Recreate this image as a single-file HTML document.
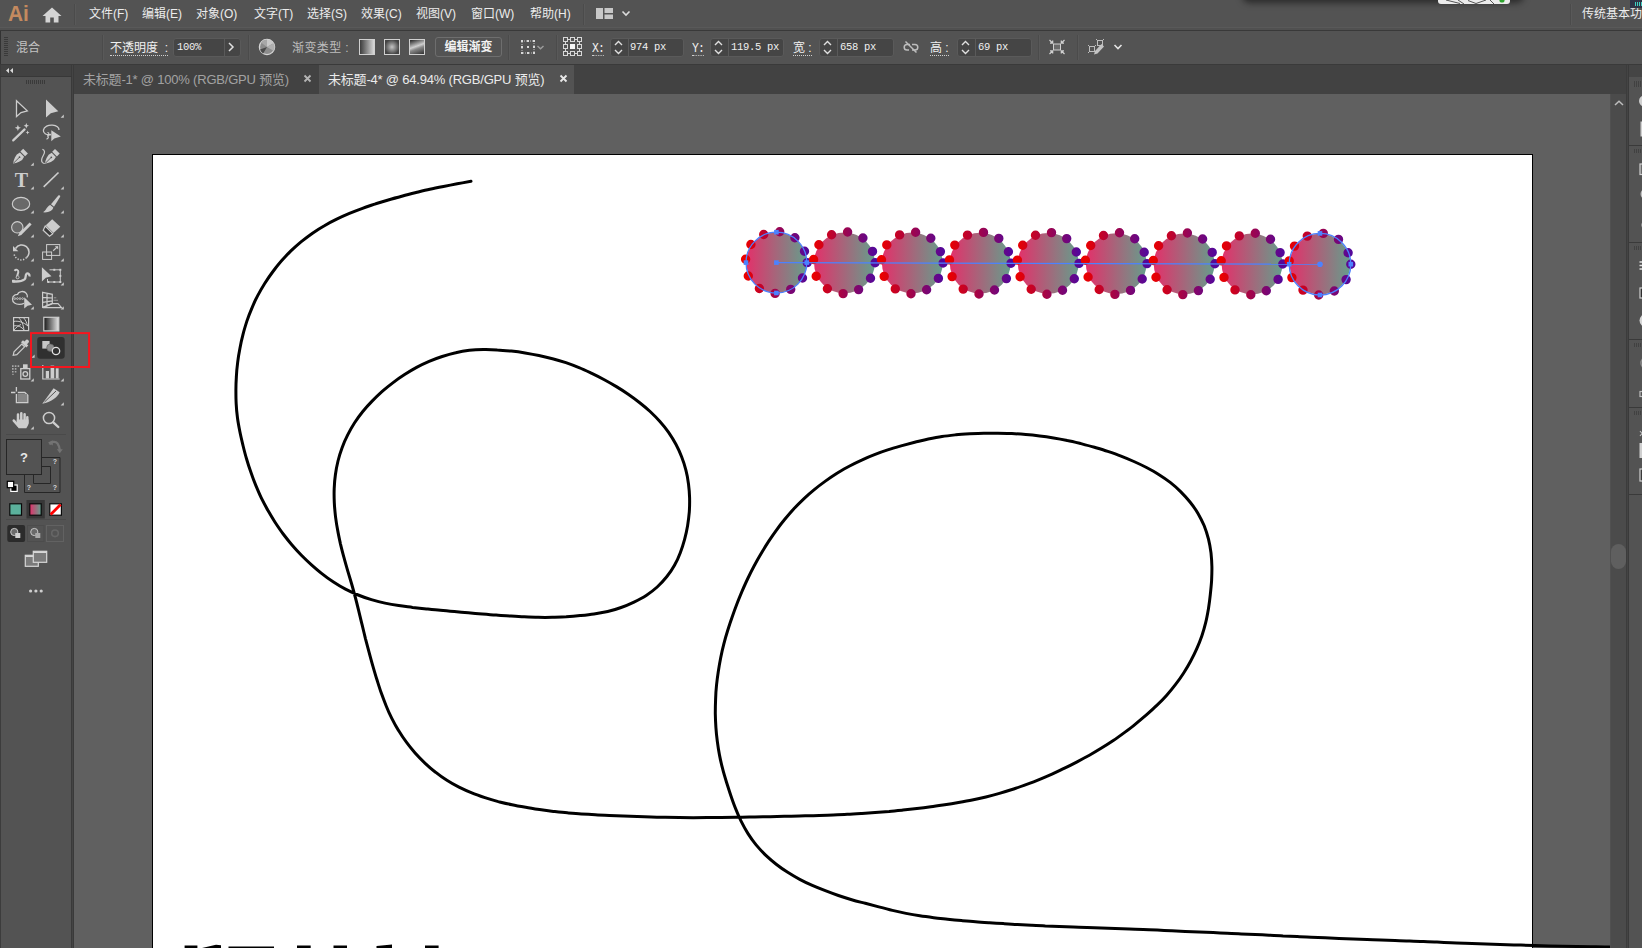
<!DOCTYPE html>
<html lang="zh-CN"><head><meta charset="utf-8"><title>Adobe Illustrator</title>
<style>
*{box-sizing:border-box;margin:0;padding:0}
html,body{width:1642px;height:948px;overflow:hidden;background:#606060}
body{position:relative;font-family:"Liberation Sans","Noto Sans CJK SC",sans-serif;font-size:12px;color:#e6e6e6}
.abs{position:absolute}
#menubar{position:absolute;left:0;top:0;width:1642px;height:29px;background:#535353}
#menuline{position:absolute;left:0;top:27px;width:1642px;height:4px;background:linear-gradient(#595959 0 1px,#505050 1px 3px,#393939 3px 4px)}
#ctrlbar{position:absolute;left:0;top:31px;width:1642px;height:33px;background:#535353}
.mi{position:absolute;top:0;height:29px;line-height:29px;white-space:nowrap;color:#ececec;font-size:12px}
.vsep{position:absolute;width:2px;background:linear-gradient(90deg,#4b4b4b 0 1px,#595959 1px 2px)}
.lbl{position:absolute;top:32px;height:33px;line-height:32px;white-space:nowrap;font-size:12px}
.ul{border-bottom:1px dotted #d0d0d0;height:auto;line-height:13px;top:42px;padding-bottom:0}
.fld{position:absolute;top:38px;height:19px;background:#454545;border:1px solid #5a5a5a;border-radius:3px}
.fld .dv{position:absolute;top:0;bottom:0;width:1px;background:#5a5a5a}
.num{position:absolute;top:38px;height:19px;line-height:18px;font-family:"Liberation Mono",monospace;font-size:10.5px;letter-spacing:-0.3px;color:#f0f0f0;white-space:pre}
#tabbar{position:absolute;left:74px;top:64px;width:1568px;height:30px;background:#424242}
.tab{position:absolute;top:65px;height:30px;line-height:29px;font-size:13px;letter-spacing:-0.2px;white-space:nowrap}
#tools{position:absolute;left:0;top:64px;width:72px;height:884px;background:#535353}
#toolshead{position:absolute;left:0;top:64px;width:72px;height:13px;background:#424242}
#toolsedge{position:absolute;left:71px;top:64px;width:3px;height:884px;background:linear-gradient(90deg,#3a3a3a 0 1px,#444 1px 2px,#3a3a3a 2px 3px)}
#artboard{position:absolute;left:152px;top:154px;width:1381px;height:800px;background:#fff;border:1px solid #000}
svg{position:absolute;overflow:visible}
</style></head><body>

<div id="menubar"></div><div id="menuline"></div><div id="ctrlbar"></div>
<div class="abs" style="left:8px;top:0;height:29px;line-height:28px;font-size:22px;font-weight:bold;color:#c48a5f;transform:scaleX(.95);transform-origin:0 50%">Ai</div>
<svg style="left:42px;top:7px" width="20" height="16" viewBox="0 0 20 16"><path d="M10 0.5 L19.5 9 H16.5 V15.5 H11.8 V10.5 H8.2 V15.5 H3.5 V9 H0.5 Z" fill="#d4d4d4"/></svg>
<div class="vsep" style="left:74px;top:4px;height:21px"></div>
<div class="mi" style="left:89px">文件(F)</div>
<div class="mi" style="left:142px">编辑(E)</div>
<div class="mi" style="left:196px">对象(O)</div>
<div class="mi" style="left:254px">文字(T)</div>
<div class="mi" style="left:307px">选择(S)</div>
<div class="mi" style="left:361px">效果(C)</div>
<div class="mi" style="left:416px">视图(V)</div>
<div class="mi" style="left:471px">窗口(W)</div>
<div class="mi" style="left:530px">帮助(H)</div>
<div class="vsep" style="left:583px;top:4px;height:21px"></div>
<svg style="left:596px;top:8px" width="36" height="12" viewBox="0 0 36 12"><path d="M0 0h7v11h-7zM8.5 0h8.5v5h-8.5zM8.5 6.5h8.5v4.5h-8.5z" fill="#c8c8c8"/><path d="M26.5 3.5l3.5 3.5l3.5-3.5" fill="none" stroke="#dcdcdc" stroke-width="1.6"/></svg>
<div class="vsep" style="left:1570px;top:4px;height:21px"></div>
<div class="mi" style="left:1582px">传统基本功</div>
<!-- floating popup fragment at top -->
<div class="abs" style="left:1246px;top:-22px;width:274px;height:18px;background:#222;box-shadow:0 3px 6px 4px rgba(20,20,20,.62);border-radius:4px"></div>
<div class="abs" style="left:1438px;top:-6px;width:72px;height:10px;background:#ececec;border-radius:3px;overflow:hidden"><svg style="left:0;top:0" width="72" height="10" viewBox="0 0 72 10"><path d="M8 6l14 3.500M20 6l6 4M30 6.500l8 3l10-3.500M52 6l4 4" stroke="#555" stroke-width="1" fill="none"/><circle cx="64" cy="6" r="2.600" fill="#2ea52e"/></svg></div>
<div class="abs" style="left:1630px;top:0;width:12px;height:8px;background:#2e3446"></div>
<div class="abs" style="left:1635px;top:2px;width:7px;height:4px;background:repeating-linear-gradient(90deg,#3fd0c0 0 1px,transparent 1px 2px)"></div>

<!-- control bar -->
<div class="abs" style="left:0;top:31px;width:1px;height:33px;background:#333"></div>
<div class="abs" style="left:4px;top:37px;width:4px;height:20px;background:repeating-linear-gradient(#3a3a3a 0 1px,transparent 1px 2px)"></div>
<div class="lbl" style="left:16px;color:#c4c4c4">混合</div>
<div class="vsep" style="left:102px;top:35px;height:25px"></div>
<div class="lbl ul" style="left:110px;color:#f0f0f0">不透明度&nbsp; :</div>
<div class="fld" style="left:173px;width:68px"><div class="dv" style="left:50px"></div></div>
<div class="num" style="left:177px">100%</div>
<svg style="left:227px;top:42px" width="8" height="10" viewBox="0 0 8 10"><path d="M2 1l4 4l-4 4" fill="none" stroke="#e0e0e0" stroke-width="1.5"/></svg>
<div class="vsep" style="left:248px;top:35px;height:25px"></div>
<svg style="left:258px;top:38px" width="18" height="18" viewBox="0 0 18 18"><circle cx="9" cy="9" r="7.6" fill="#8c8c8c" stroke="#d6d6d6" stroke-width="1.3"/><path d="M9 9L9 1.5A7.5 7.5 0 0 1 15.5 5.2Z" fill="#c9c9c9"/><path d="M9 9L15.5 5.2A7.5 7.5 0 0 1 15.5 12.8Z" fill="#b0b0b0"/><path d="M9 9L5.2 15.5A7.5 7.5 0 0 1 2 11.5Z" fill="#4a4a4a"/><path d="M9 9L9 1.5A7.5 7.5 0 0 0 3 4.5Z" fill="#a8a8a8"/></svg>
<div class="lbl" style="left:292px;color:#bdbdbd;letter-spacing:.4px">渐变类型 :</div>
<div class="abs" style="left:359px;top:39px;width:16px;height:16px;border:1px solid #d0d0d0;background:linear-gradient(90deg,#3c3c3c,#d8d8d8)"></div>
<div class="abs" style="left:384px;top:39px;width:16px;height:16px;border:1px solid #d0d0d0;background:radial-gradient(circle,#c4c4c4,#444 75%)"></div>
<div class="abs" style="left:409px;top:39px;width:16px;height:16px;border:1px solid #d0d0d0;background:linear-gradient(160deg,#333 5%,#cfcfcf 45%,#888 60%,#3a3a3a 95%)"></div>
<div class="abs" style="left:435px;top:37px;width:67px;height:20px;border:1px solid #6e6e6e;border-radius:3px;text-align:center;line-height:18px;font-weight:bold;color:#f2f2f2;font-size:12px">编辑渐变</div>
<div class="vsep" style="left:508px;top:35px;height:25px"></div>
<svg style="left:520px;top:39px" width="26" height="16" viewBox="0 0 26 16"><path d="M2 2h12v12h-12z" fill="none" stroke="#bdbdbd" stroke-width="1" stroke-dasharray="1 1"/><g fill="#d8d8d8"><rect x="1" y="1" width="2" height="2"/><rect x="1" y="7" width="2" height="2"/><rect x="1" y="13" width="2" height="2"/><rect x="7" y="1" width="2" height="2"/><rect x="7" y="7" width="2" height="2"/><rect x="7" y="13" width="2" height="2"/><rect x="13" y="1" width="2" height="2"/><rect x="13" y="7" width="2" height="2"/><rect x="13" y="13" width="2" height="2"/></g><path d="M17.500 7l3 2.800l3-2.800" fill="none" stroke="#9c9c9c" stroke-width="1.400"/></svg>
<div class="vsep" style="left:556px;top:35px;height:25px"></div>
<svg style="left:563px;top:37px" width="19" height="19" viewBox="0 0 19 19"><g fill="none" stroke="#d8d8d8" stroke-width="1"><path d="M2.5 2.5h14v14h-14z"/><path d="M9.5 2.5v14M2.5 9.5h14" stroke-opacity=".0"/></g><g fill="#535353" stroke="#d8d8d8" stroke-width="1"><rect x=".5" y=".5" width="4" height="4"/><rect x="7.5" y=".5" width="4" height="4"/><rect x="14.5" y=".5" width="4" height="4"/><rect x=".5" y="7.5" width="4" height="4"/><rect x="14.5" y="7.5" width="4" height="4"/><rect x=".5" y="14.5" width="4" height="4"/><rect x="7.5" y="14.5" width="4" height="4"/><rect x="14.5" y="14.5" width="4" height="4"/></g><rect x="7" y="7" width="5" height="5" fill="#f4f4f4"/></svg>
<div class="lbl ul" style="left:592px;font-family:'Liberation Mono',monospace;font-size:13.5px;letter-spacing:-1px;color:#f0f0f0;transform:scaleX(.85);transform-origin:0 50%">X:</div>
<div class="fld" style="left:610px;width:74px"><div class="dv" style="left:17px"></div></div>
<svg style="left:613px;top:40px" width="11" height="15" viewBox="0 0 11 15"><path d="M2 5l3.5-3.5l3.5 3.5M2 10l3.5 3.5l3.5-3.5" fill="none" stroke="#e0e0e0" stroke-width="1.4"/></svg>
<div class="num" style="left:630px">974 px</div>
<div class="lbl ul" style="left:692px;font-family:'Liberation Mono',monospace;font-size:13.5px;letter-spacing:-1px;color:#f0f0f0;transform:scaleX(.85);transform-origin:0 50%">Y:</div>
<div class="fld" style="left:710px;width:74px"><div class="dv" style="left:17px"></div></div>
<svg style="left:713px;top:40px" width="11" height="15" viewBox="0 0 11 15"><path d="M2 5l3.5-3.5l3.5 3.5M2 10l3.5 3.5l3.5-3.5" fill="none" stroke="#e0e0e0" stroke-width="1.4"/></svg>
<div class="num" style="left:731px">119.5 px</div>
<div class="lbl ul" style="left:793px;color:#f0f0f0">宽 :</div>
<div class="fld" style="left:819px;width:75px"><div class="dv" style="left:17px"></div></div>
<svg style="left:822px;top:40px" width="11" height="15" viewBox="0 0 11 15"><path d="M2 5l3.5-3.5l3.5 3.5M2 10l3.5 3.5l3.5-3.5" fill="none" stroke="#e0e0e0" stroke-width="1.4"/></svg>
<div class="num" style="left:840px">658 px</div>
<svg style="left:903px;top:40px" width="16" height="14" viewBox="0 0 16 14"><g fill="none" stroke="#bdbdbd" stroke-width="1.5"><path d="M7 4.5H4a2.8 2.8 0 0 0 0 5.6h2"/><path d="M9 4.5h3a2.8 2.8 0 0 1 0 5.6h-3"/><path d="M2.5 1.5l11 11"/></g></svg>
<div class="lbl ul" style="left:930px;color:#f0f0f0">高 :</div>
<div class="fld" style="left:957px;width:75px"><div class="dv" style="left:17px"></div></div>
<svg style="left:960px;top:40px" width="11" height="15" viewBox="0 0 11 15"><path d="M2 5l3.5-3.5l3.5 3.5M2 10l3.5 3.5l3.5-3.5" fill="none" stroke="#e0e0e0" stroke-width="1.4"/></svg>
<div class="num" style="left:978px">69 px</div>
<div class="vsep" style="left:1038px;top:35px;height:25px"></div>
<svg style="left:1049px;top:39px" width="16" height="16" viewBox="0 0 16 16"><rect x="4.5" y="5" width="7" height="6" fill="#6a6a6a" stroke="#d0d0d0" stroke-width="1"/><g stroke="#d0d0d0" stroke-width="1.2" fill="none"><path d="M0.5 1l3 3M1 4.2h2.7V1.5"/><path d="M15.5 1l-3 3M15 4.2h-2.7V1.5"/><path d="M0.5 15l3-3M1 11.8h2.7v2.7"/><path d="M15.5 15l-3-3M15 11.8h-2.7v2.7"/></g></svg>
<div class="vsep" style="left:1077px;top:35px;height:25px"></div>
<svg style="left:1087px;top:38px" width="18" height="18" viewBox="0 0 18 18"><rect x="2.5" y="8.5" width="5" height="5" fill="none" stroke="#bdbdbd"/><rect x="10.5" y="2.5" width="5" height="5" fill="none" stroke="#bdbdbd"/><path d="M1 7l1.5 1.5M9 15l-1.500-1.500M9 7l-1.500 1.500M1 15l1.500-1.500M9 1l1.500 1.500M17 1l-1.500 1.500" stroke="#bdbdbd" fill="none"/><path d="M7 16.500l1-3.500l6.500-7l2.500 2.500l-6.500 7z" fill="#c4c4c4"/></svg>
<svg style="left:1113px;top:43px" width="10" height="8" viewBox="0 0 10 8"><path d="M1.500 2l3.500 3.500l3.500-3.500" fill="none" stroke="#e4e4e4" stroke-width="1.6"/></svg>

<!-- tab bar -->
<div id="tabbar"></div>
<div class="tab" style="left:83px;color:#a2a2a2">未标题-1* @ 100% (RGB/GPU 预览)</div>
<div class="abs" style="left:303px;top:74px;width:9px;height:9px"><svg style="left:0;top:0" width="9" height="9" viewBox="0 0 9 9"><path d="M1.500 1.500l6 6M7.500 1.500l-6 6" stroke="#b4b4b4" stroke-width="1.800"/></svg></div>
<div class="abs" style="left:319px;top:64px;width:255px;height:30px;background:#535353"></div>
<div class="tab" style="left:328px;color:#ebebeb">未标题-4* @ 64.94% (RGB/GPU 预览)</div>
<div class="abs" style="left:559px;top:74px;width:9px;height:9px"><svg style="left:0;top:0" width="9" height="9" viewBox="0 0 9 9"><path d="M1.500 1.500l6 6M7.500 1.500l-6 6" stroke="#e8e8e8" stroke-width="1.800"/></svg></div>

<div id="tools"></div><div id="toolshead"></div><div id="toolsedge"></div>
<div class="abs" style="left:0;top:64px;width:1px;height:884px;background:#3c3c3c"></div>
<div class="abs" style="left:0;top:76px;width:72px;height:1px;background:#383838"></div>
<svg style="left:0;top:0" width="100" height="948" viewBox="0 0 100 948">
<defs>
<linearGradient id="gPT" x1="0" x2="1" y1="0" y2="0"><stop offset="0" stop-color="#e2306a"/><stop offset="1" stop-color="#5fa28e"/></linearGradient>
<linearGradient id="gBW" x1="0" x2="1" y1="0" y2="0"><stop offset="0" stop-color="#161616"/><stop offset="1" stop-color="#e8e8e8"/></linearGradient>
<path id="cnr" d="M3.200 0V3.200H0Z" fill="#c8c8c8"/>
</defs>
<!-- header collapse arrows & grip -->
<path d="M9 68l-3 2.600l3 2.600zM13 68l-3 2.600l3 2.600z" fill="#d8d8d8"/>
<path d="M26.500 80v4M28.500 80v4M30.500 80v4M32.500 80v4M34.500 80v4M36.500 80v4M38.500 80v4M40.500 80v4M42.500 80v4M44.500 80v4" stroke="#3a3a3a" stroke-width="1"/>
<g fill="#cdcdcd" stroke="none">
<!-- row1 -->
<path d="M16.500 100.800V116.500L21 112.600L27.300 110.900Z" fill="#464646" stroke="#cdcdcd" stroke-width="1.300" stroke-linejoin="miter"/>
<path d="M46 99.500V117.600L50.800 113.200L58.300 111.200Z"/>
<use href="#cnr" x="60.600" y="114.600"/>
<!-- row2 magic wand -->
<path d="M13.200 140.400L24.600 129.400" stroke="#cdcdcd" stroke-width="2.200" stroke-linecap="round"/>
<path d="M17.900 124.700l.9 2.200l2.200.9l-2.200.9l-.9 2.200l-.9-2.200l-2.200-.9l2.200-.9zM26.300 123l.8 1.900l1.900.8l-1.900.8l-.8 1.900l-.8-1.900l-1.900-.8l1.900-.8zM27.600 130.500l.6 1.400l1.400.6l-1.400.6l-.6 1.400l-.6-1.400l-1.400-.6l1.400-.6z"/>
<!-- lasso -->
<path d="M51 134.500C46 135.500 43 133 43.400 130.200C44 126.500 48.500 124.800 52.500 125.200C56.500 125.600 59.300 127.500 59 130" fill="none" stroke="#cdcdcd" stroke-width="1.300"/>
<path d="M47.400 132.500a1.600 1.600 0 1 1 -.1 3.200c1.500.8 1.500 2.500 -.8 3.600" fill="none" stroke="#cdcdcd" stroke-width="1.200"/>
<path d="M51.300 130.300V141.300L54.300 138.600L60.800 136.600Z"/>
<!-- row3 pen -->
<path d="M13.1 163.6L13.7 160.7L14.9 157.6L16.8 154.6L19.9 152.6L24.1 156.8L22.1 159.9L19.1 161.8L16.0 163.0ZM20.4 151.6L23.2 148.8L27.9 153.5L25.1 156.3Z"/><path d="M13.7 163.0L19.1 157.6" stroke="#535353" stroke-width=".9" fill="none"/><circle cx="19.5" cy="157.2" r=".9" fill="#535353"/>
<use href="#cnr" x="30.600" y="162.500"/>
<!-- curvature pen -->
<path d="M44.9 163.7L45.5 160.8L46.7 157.7L48.6 154.7L51.7 152.7L55.9 156.9L53.9 160.0L50.9 161.9L47.8 163.1ZM52.2 151.7L55.0 148.9L59.7 153.6L56.9 156.4Z"/><path d="M45.5 163.1L50.9 157.7" stroke="#535353" stroke-width=".9" fill="none"/><circle cx="51.3" cy="157.3" r=".9" fill="#535353"/>
<path d="M42.400 149.300C45 150.300 45 152.500 43.500 155C41.800 158 40.800 161 42.500 162.600C43.300 163.300 44 163.500 44.800 163.500" fill="none" stroke="#cdcdcd" stroke-width="1.200"/>
<!-- row4 line -->
<path d="M43.700 186.800L58.500 172.500" stroke="#cdcdcd" stroke-width="1.600" fill="none"/>
<use href="#cnr" x="30.600" y="186.300"/><use href="#cnr" x="60.600" y="186.300"/>
<!-- row5 ellipse / brush -->
<ellipse cx="21" cy="203.900" rx="8.700" ry="6.500" fill="#696969" stroke="#cdcdcd" stroke-width="1.100"/>
<use href="#cnr" x="30.600" y="210.300"/>
<path d="M51 204.300L58.300 195.600C59.400 194.600 60.800 195.600 60 197L54 206.800Z"/>
<path d="M50.300 205L53.300 207.600C52.800 211 48.500 212.800 43 212.300C46 210.800 46.800 206.300 50.300 205Z"/>
<use href="#cnr" x="60.600" y="210.300"/>
<!-- row6 shaper / eraser -->
<circle cx="17.300" cy="227.300" r="5.700" fill="#696969" stroke="#cdcdcd" stroke-width="1.100"/>
<path d="M29.600 222.600L31.600 224.600L21.300 234.900L17.800 236.200L19.300 232.900Z"/>
<use href="#cnr" x="30.600" y="234.300"/>
<path d="M52.200 219.300L60.300 226.800L53.500 233L45.800 225.300Z"/>
<path d="M45.200 226L52.800 233.600L49.500 236.300L43.200 230.300Z" fill="#3c3c3c" stroke="#cdcdcd" stroke-width="1.200"/>
<use href="#cnr" x="60.600" y="234.300"/>
<!-- row7 rotate / scale -->
<path d="M15.600 248.500A7.200 7.200 0 1 1 26.500 257.600" fill="none" stroke="#cdcdcd" stroke-width="1.500"/>
<path d="M26.500 257.600A7.200 7.200 0 0 1 14.200 254.500" fill="none" stroke="#cdcdcd" stroke-width="1.500" stroke-dasharray="1.300 1.500"/>
<path d="M13 246v5.300h5.300z"/>
<use href="#cnr" x="30.600" y="258.300"/>
<rect x="46.600" y="244.600" width="13.200" height="10.800" fill="none" stroke="#cdcdcd" stroke-width="1"/>
<rect x="42.600" y="252" width="9" height="7.400" fill="none" stroke="#cdcdcd" stroke-width="1"/>
<path d="M53.200 250.800L57.600 246.600" stroke="#cdcdcd" stroke-width="1.200"/><path d="M54.800 246.200h3.400v3.400z"/>
<use href="#cnr" x="60.600" y="258.300"/>
<!-- row8 width / free transform -->
<path d="M13 281.300C18 281.800 22 281.300 24.500 279.300C26.500 277.600 25 275 26.500 273.800C28 272.800 29.800 274 29.500 276.500" fill="none" stroke="#cdcdcd" stroke-width="2.300"/>
<path d="M14.500 270.800C16 269 18.500 269.800 18.300 272C18.100 274 16.500 275.500 17.300 277.800" fill="none" stroke="#cdcdcd" stroke-width="2"/>
<circle cx="17.600" cy="277.300" r="1.500" fill="#535353" stroke="#cdcdcd" stroke-width=".9"/>
<path d="M18.800 276.300L23.300 272.300" stroke="#535353" stroke-width="1"/>
<rect x="12" y="279.800" width="2.800" height="2.800"/>
<use href="#cnr" x="30.600" y="282.300"/>
<path d="M41.900 267.300V281.500L45.800 277.800L51.500 276.200Z"/>
<path d="M49.500 269.800H60.300V282H47.500V279" fill="none" stroke="#cdcdcd" stroke-width="1"/><rect x="53.3" y="268.8" width="2" height="2"/><rect x="59.3" y="268.8" width="2" height="2"/><rect x="59.3" y="274.9" width="2" height="2"/><rect x="59.3" y="281.0" width="2" height="2"/><rect x="53.3" y="281.0" width="2" height="2"/><rect x="47.3" y="281.0" width="2" height="2"/>
<use href="#cnr" x="60.600" y="282.300"/>
<!-- row9 shape builder / perspective -->
<path d="M24 303.300C21.500 304.800 17 304.800 14.500 303C11.800 301 11.800 296.800 14.800 295C15.500 294.600 16.600 294.300 17.600 294.300C18.500 291.300 24 290.300 26.300 293.300C27.300 294.600 27.600 296 27.300 297.300" fill="none" stroke="#cdcdcd" stroke-width="1.300"/>
<g fill="none" stroke="#cdcdcd" stroke-width=".8"><circle cx="14.800" cy="298.600" r=".9"/><circle cx="17.400" cy="298.600" r=".9"/><circle cx="20" cy="298.600" r=".9"/><circle cx="22.600" cy="298.600" r=".9"/></g>
<path d="M24.200 297.300V308.600L27.600 305.800L32 304.800Z"/>
<use href="#cnr" x="30.600" y="306.300"/>
<path d="M42.600 292.300L52.300 294.300V303.300L42.600 307.300Z M47 293.200V305.500 M42.600 297.300L52.300 298 M42.600 302.300L52.300 300.800" fill="none" stroke="#cdcdcd" stroke-width="1.200"/>
<path d="M43 307.600L52.500 303.600H58L61.500 307.600Z" fill="none" stroke="#cdcdcd" stroke-width="1.200"/>
<path d="M53.500 300.300h4.500M53.800 297.800h2.500" stroke="#9a9a9a" stroke-width="1"/>
<use href="#cnr" x="60.600" y="306.300"/>
<!-- row10 mesh / gradient -->
<rect x="13.600" y="317.600" width="15" height="13" fill="#444" stroke="#cdcdcd" stroke-width="1.200"/>
<path d="M13.600 321.500C18 320.500 23.500 322 28.600 326.500M13.600 326C17.500 325 21.500 326.500 24.500 330.600M18.500 317.600C21 320 23.500 324 24 330.600M23.500 317.600C25.500 320 27 323 27.500 326M14 330C16 327.500 18.500 325.500 21 324.500" fill="none" stroke="#cdcdcd" stroke-width="1"/>
<rect x="43.800" y="317.300" width="15" height="13.600" fill="url(#gBW)" stroke="#cdcdcd" stroke-width="1.200"/>
<!-- row11 eyedropper / blend -->
<path d="M13.200 355.300L14 351.800L21.800 344L24.600 346.800L16.800 354.600Z" fill="none" stroke="#cdcdcd" stroke-width="1.200"/>
<path d="M21 342.300L23 340.300L24.300 341.600L26.300 339.800C27.300 338.800 29.800 341 28.800 342.300L27 344.300L28.300 345.600L26.300 347.600Z"/>
<use href="#cnr" x="31.400" y="354.600"/>
<rect x="37.200" y="337" width="27.500" height="21.700" rx="3" fill="#303030"/>
<rect x="42.300" y="341" width="7.300" height="7.600" fill="#c6c6c6"/>
<circle cx="50.400" cy="347.700" r="3.700" fill="#8c8c8c" stroke="#5a5a5a" stroke-width=".6"/>
<circle cx="56" cy="351" r="3.700" fill="#303030" stroke="#e0e0e0" stroke-width="1.300"/>
<!-- row12 symbol sprayer / graph -->
<rect x="20.800" y="368.600" width="9" height="10.400" fill="none" stroke="#cdcdcd" stroke-width="1.300"/>
<rect x="23" y="364.300" width="4.600" height="4" />
<circle cx="25.300" cy="374" r="2.300" fill="none" stroke="#cdcdcd" stroke-width="1.300"/>
<path d="M12 365.300h1.600v1.600h-1.600zM14.800 365.300h1.600v1.600h-1.600zM17.600 365.300h1.600v1.600h-1.600zM12 368.100h1.600v1.600h-1.600zM14.800 368.100h1.600v1.600h-1.600zM12 370.900h1.600v1.600h-1.600zM14.800 370.900h1.600v1.600h-1.600zM12.300 373.700h1.300v1.300h-1.300z" fill="#a8a8a8"/>
<use href="#cnr" x="30.600" y="378.300"/>
<path d="M42.800 365V379H59.600" fill="none" stroke="#cdcdcd" stroke-width="1.200"/>
<rect x="45.800" y="371" width="3.200" height="7.400"/><rect x="50.600" y="365.600" width="3.600" height="12.800"/><rect x="55.800" y="368.300" width="2.800" height="10.100"/>
<use href="#cnr" x="60.600" y="378.300"/>
<!-- row13 artboard / slice -->
<path d="M16.400 387v4.600M11 392.500h4.400" stroke="#cdcdcd" stroke-width="1.300"/>
<path d="M16.400 394V402.600H27.800V395.300L24.800 392.500H17.800" fill="none" stroke="#cdcdcd" stroke-width="1.300"/>
<rect x="17.600" y="394" width="9.400" height="8" fill="#858585"/>
<path d="M42.300 403.800L53.600 388.300L59.600 392.300C57.500 397.500 51 402 42.300 403.800Z"/>
<path d="M44.500 402L56 391" stroke="#535353" stroke-width="1"/>
<use href="#cnr" x="60.600" y="402.300"/>
<!-- row14 hand / zoom -->
<path d="M18 414.600V422M21.300 413.200V422M24.600 414.200V422M27.300 417.300V423" fill="none" stroke="#cdcdcd" stroke-width="2.500" stroke-linecap="round"/>
<path d="M13.800 420.600L18 425.500" fill="none" stroke="#cdcdcd" stroke-width="2.600" stroke-linecap="round"/>
<path d="M16.800 419.500H28.550V423C28.550 425 27.300 426.500 26.300 428.300H18.600C17.800 427 16.800 425 16.800 423Z"/>
<use href="#cnr" x="30.600" y="426.300"/>
<circle cx="49" cy="418" r="5.600" fill="none" stroke="#cdcdcd" stroke-width="1.500"/>
<path d="M53.300 422.300L58.300 427" stroke="#cdcdcd" stroke-width="2.400" stroke-linecap="round"/>
</g>
<!-- separators -->
<path d="M6 434.500H66" stroke="#4a4a4a" stroke-width="1"/>
<path d="M6 519.500H66" stroke="#4a4a4a" stroke-width="1"/>
<!-- fill / stroke -->
<path d="M49.500 444.500C51 441.500 55.500 441 57.500 443.500C59 445.500 59.500 448 59.800 450" fill="none" stroke="#737373" stroke-width="2.200"/>
<path d="M48 442.500l4.800-2.300v5.300zM56.800 449.300h6l-3 4z" fill="#737373"/>
<path d="M24.500 457.500H60V492.500H24.500ZM33.500 466.500H50.500V483.500H33.500Z" fill="#535353" fill-rule="evenodd" stroke="#262626" stroke-width="1"/>
<rect x="6.500" y="439.500" width="35" height="35" fill="#535353" stroke="#262626" stroke-width="1"/>
<!-- default fill stroke -->
<rect x="10.800" y="485" width="6.400" height="6.400" fill="#000" stroke="#fff" stroke-width="1.200"/>
<rect x="7.300" y="481.300" width="6.400" height="6.400" fill="#fff" stroke="#000" stroke-width="1.200"/>
<!-- color / gradient / none -->
<rect x="26.500" y="500" width="18.300" height="18.500" fill="#373737"/>
<rect x="9.800" y="503.800" width="11.700" height="11.400" fill="#5bb19c" stroke="#0a0a0a" stroke-width="1.200"/>
<rect x="29.800" y="503.800" width="11.400" height="11.400" fill="url(#gPT)" stroke="#0a0a0a" stroke-width="1.200"/>
<rect x="49.800" y="503.800" width="11.600" height="11.400" fill="#fff" stroke="#0a0a0a" stroke-width="1.200"/>
<path d="M50.600 514.600L60.600 504.600" stroke="#f00" stroke-width="2.800"/>
<!-- draw modes -->
<rect x="7.300" y="525" width="17.800" height="17" rx="2" fill="#2b2b2b"/>
<circle cx="14.300" cy="532" r="3.600" fill="#6a6a6a" stroke="#c8c8c8" stroke-width="1"/><rect x="15.300" y="533" width="5" height="5" fill="#cfcfcf"/>
<rect x="27.500" y="525.500" width="16.500" height="16" fill="none" stroke="#4c4c4c" stroke-width="1"/>
<circle cx="34.300" cy="532" r="3.600" fill="#6a6a6a" stroke="#c8c8c8" stroke-width="1"/><rect x="35.300" y="533" width="5" height="5" fill="#a8a8a8"/>
<rect x="46.500" y="525.500" width="17" height="16" fill="none" stroke="#626262" stroke-width="1"/>
<circle cx="55" cy="533.300" r="3.300" fill="none" stroke="#666" stroke-width="1.600"/>
<!-- screen mode -->
<rect x="25.300" y="555.300" width="13" height="11" fill="#7a7a7a" stroke="#d6d6d6" stroke-width="1.200"/>
<rect x="33.300" y="551.300" width="13.400" height="11" fill="#7a7a7a" stroke="#d6d6d6" stroke-width="1.200"/>
<path d="M33.300 552.300h13.400M25.300 556.300h8" stroke="#d6d6d6" stroke-width="1.600"/>
<!-- more -->
<circle cx="30.600" cy="591" r="1.600" fill="#cfcfcf"/><circle cx="35.900" cy="591" r="1.600" fill="#cfcfcf"/><circle cx="41.200" cy="591" r="1.600" fill="#cfcfcf"/>
<!-- red highlight -->
<rect x="31" y="333.100" width="58.100" height="33.900" fill="none" stroke="#f5161f" stroke-width="2"/>
</svg>
<div class="abs" style="left:13px;top:169px;width:17px;height:22px;line-height:22px;text-align:center;font-family:'Liberation Serif',serif;font-size:20px;font-weight:bold;color:#cdcdcd">T</div>
<div class="abs" style="left:14px;top:448px;width:20px;height:20px;line-height:20px;text-align:center;font-size:13px;font-weight:bold;color:#e8e8e8">?</div>
<div class="abs" style="left:51px;top:457px;width:8px;height:9px;line-height:9px;text-align:center;font-size:7px;font-weight:bold;color:#d8d8d8">?</div>
<div class="abs" style="left:25px;top:483px;width:8px;height:9px;line-height:9px;text-align:center;font-size:7px;font-weight:bold;color:#d8d8d8">?</div>
<div class="abs" style="left:51px;top:483px;width:8px;height:9px;line-height:9px;text-align:center;font-size:7px;font-weight:bold;color:#d8d8d8">?</div>

<div id="artboard"></div>
<svg style="left:0;top:0" width="1642" height="948" viewBox="0 0 1642 948">
<defs><linearGradient id="gf" x1="0" x2="1" y1="0" y2="0"><stop offset="0" stop-color="#e4306a"/><stop offset="1" stop-color="#649e8c"/></linearGradient><linearGradient id="gs" x1="0" x2="1" y1="0" y2="0"><stop offset="0" stop-color="#ea0000"/><stop offset="1" stop-color="#54089a"/></linearGradient></defs>
<path d="M471.0 181.3C468.7 181.7 461.8 183.0 457.2 183.8C452.6 184.7 448.1 185.6 443.5 186.5C438.9 187.4 434.3 188.3 429.8 189.3C425.2 190.3 420.7 191.4 416.1 192.5C411.6 193.6 407.1 194.7 402.6 196.0C398.1 197.2 393.6 198.4 389.1 199.7C384.6 201.1 380.2 202.4 375.7 203.8C371.3 205.3 366.8 206.7 362.5 208.3C358.1 209.9 353.7 211.6 349.4 213.4C345.1 215.2 340.9 217.1 336.7 219.2C332.5 221.2 328.4 223.4 324.4 225.8C320.3 228.1 316.4 230.6 312.5 233.2C308.7 235.9 305.0 238.7 301.3 241.6C297.7 244.6 294.2 247.7 290.9 250.9C287.6 254.1 284.4 257.6 281.3 261.1C278.3 264.6 275.4 268.2 272.6 272.0C269.8 275.7 267.2 279.6 264.7 283.5C262.2 287.5 259.9 291.5 257.7 295.6C255.5 299.7 253.6 304.0 251.8 308.3C249.9 312.6 248.3 316.9 246.8 321.4C245.4 325.8 244.0 330.3 242.9 334.8C241.7 339.3 240.7 343.8 239.9 348.4C239.0 353.0 238.2 357.6 237.7 362.2C237.1 366.9 236.6 371.5 236.4 376.2C236.1 380.8 235.9 385.5 235.9 390.1C235.9 394.8 235.9 399.5 236.2 404.1C236.4 408.8 236.9 413.4 237.5 418.0C238.1 422.7 239.0 427.2 239.9 431.8C240.8 436.4 241.9 440.9 243.0 445.5C244.1 450.0 245.2 454.5 246.6 459.0C247.9 463.5 249.3 467.9 250.9 472.3C252.4 476.7 254.0 481.1 255.8 485.4C257.6 489.7 259.4 494.0 261.4 498.2C263.5 502.4 265.7 506.5 268.0 510.6C270.3 514.6 272.7 518.6 275.2 522.5C277.8 526.4 280.4 530.3 283.2 534.0C286.0 537.7 288.9 541.4 292.0 544.9C295.0 548.4 298.2 551.9 301.4 555.2C304.7 558.5 308.1 561.8 311.5 564.9C315.0 568.0 318.5 571.1 322.2 573.9C325.8 576.8 329.6 579.6 333.5 582.1C337.4 584.7 341.4 587.1 345.5 589.2C349.6 591.4 353.9 593.3 358.2 595.0C362.5 596.8 367.0 598.3 371.4 599.6C375.9 600.9 380.4 602.1 385.0 603.1C389.5 604.1 394.1 604.9 398.7 605.6C403.3 606.3 408.0 606.8 412.6 607.4C417.2 607.9 421.9 608.4 426.5 608.9C431.2 609.4 435.8 609.9 440.4 610.3C445.1 610.8 449.7 611.2 454.4 611.6C459.0 612.0 463.7 612.4 468.3 612.8C473.0 613.2 477.6 613.6 482.3 614.0C486.9 614.4 491.6 614.8 496.2 615.1C500.9 615.4 505.6 615.8 510.2 616.0C514.9 616.3 519.5 616.6 524.2 616.8C528.8 617.0 533.5 617.2 538.2 617.3C542.8 617.4 547.5 617.4 552.2 617.3C556.8 617.2 561.5 617.0 566.2 616.8C570.8 616.5 575.5 616.1 580.1 615.6C584.7 615.1 589.4 614.6 594.0 613.9C598.6 613.3 603.2 612.5 607.7 611.5C612.3 610.4 616.8 609.1 621.1 607.5C625.5 606.0 629.8 604.1 634.0 602.1C638.2 600.0 642.3 597.9 646.2 595.4C650.1 592.9 653.8 590.1 657.2 587.0C660.6 583.9 663.8 580.4 666.7 576.8C669.6 573.2 672.3 569.3 674.5 565.3C676.8 561.3 678.7 557.0 680.3 552.7C682.0 548.3 683.4 543.8 684.6 539.4C685.8 534.9 686.8 530.3 687.6 525.7C688.3 521.1 688.9 516.5 689.3 511.8C689.6 507.2 689.7 502.5 689.6 497.9C689.5 493.2 689.1 488.6 688.5 484.0C687.9 479.4 687.1 474.7 685.9 470.2C684.8 465.7 683.4 461.3 681.7 457.0C680.0 452.6 678.1 448.4 675.9 444.3C673.7 440.2 671.2 436.2 668.6 432.4C665.9 428.6 663.0 424.9 659.9 421.5C656.8 418.0 653.5 414.7 650.1 411.5C646.7 408.4 643.1 405.4 639.4 402.5C635.8 399.6 632.0 396.8 628.2 394.2C624.3 391.5 620.4 389.0 616.4 386.6C612.4 384.2 608.4 381.9 604.3 379.7C600.1 377.5 596.0 375.4 591.8 373.4C587.5 371.4 583.3 369.4 579.0 367.7C574.7 365.9 570.3 364.2 565.9 362.7C561.5 361.2 557.0 359.9 552.5 358.7C548.0 357.5 543.5 356.4 538.9 355.5C534.3 354.5 529.8 353.7 525.1 352.9C520.5 352.2 515.9 351.6 511.3 351.1C506.6 350.6 502.0 350.1 497.3 349.9C492.7 349.6 488.0 349.4 483.4 349.5C478.7 349.6 474.0 349.8 469.4 350.3C464.8 350.8 460.2 351.6 455.7 352.7C451.1 353.7 446.7 355.0 442.2 356.5C437.8 357.9 433.4 359.5 429.1 361.4C424.9 363.2 420.7 365.2 416.6 367.4C412.5 369.6 408.5 372.1 404.6 374.6C400.7 377.1 396.8 379.8 393.1 382.6C389.4 385.4 385.7 388.3 382.2 391.4C378.8 394.5 375.4 397.7 372.1 401.1C368.9 404.4 365.7 407.9 362.8 411.5C359.9 415.1 357.1 418.9 354.6 422.8C352.1 426.7 349.8 430.7 347.7 434.9C345.6 439.0 343.7 443.3 342.1 447.7C340.5 452.0 339.1 456.5 338.0 461.0C336.9 465.5 336.0 470.1 335.4 474.7C334.7 479.3 334.4 484.0 334.2 488.6C334.0 493.3 334.1 498.0 334.3 502.6C334.5 507.3 335.0 511.9 335.5 516.6C336.1 521.2 336.8 525.8 337.7 530.4C338.5 535.0 339.5 539.5 340.5 544.1C341.6 548.6 342.7 553.1 344.0 557.6C345.2 562.1 346.5 566.6 347.8 571.1C349.1 575.6 350.5 580.0 351.8 584.5C353.1 589.0 354.3 593.5 355.5 598.0C356.7 602.5 357.8 607.1 358.9 611.6C360.0 616.1 361.0 620.7 362.2 625.2C363.3 629.7 364.4 634.3 365.5 638.8C366.7 643.3 367.9 647.8 369.1 652.3C370.3 656.8 371.5 661.3 372.8 665.8C374.1 670.3 375.4 674.8 376.8 679.3C378.2 683.7 379.6 688.2 381.1 692.6C382.7 697.0 384.3 701.3 386.1 705.7C387.8 710.0 389.7 714.2 391.8 718.4C393.9 722.6 396.1 726.7 398.6 730.6C401.0 734.6 403.6 738.5 406.4 742.2C409.1 745.9 412.1 749.6 415.1 753.1C418.2 756.6 421.5 759.9 424.9 763.1C428.3 766.3 431.8 769.4 435.5 772.2C439.1 775.1 442.9 777.8 446.9 780.3C450.8 782.8 454.9 785.1 459.0 787.2C463.2 789.3 467.4 791.2 471.8 792.9C476.1 794.7 480.5 796.2 484.9 797.7C489.3 799.1 493.8 800.4 498.3 801.6C502.9 802.7 507.4 803.8 512.0 804.7C516.5 805.7 521.1 806.5 525.7 807.3C530.3 808.2 534.9 808.9 539.5 809.6C544.2 810.3 548.8 810.9 553.4 811.4C558.1 811.9 562.7 812.4 567.3 812.8C572.0 813.2 576.6 813.6 581.3 813.9C586.0 814.2 590.6 814.5 595.3 814.8C599.9 815.1 604.6 815.3 609.3 815.5C613.9 815.7 618.6 815.9 623.2 816.1C627.9 816.2 632.6 816.4 637.2 816.5C641.9 816.6 646.6 816.8 651.2 816.9C655.9 817.1 660.6 817.2 665.2 817.3C669.9 817.4 674.6 817.5 679.2 817.6C683.9 817.6 688.6 817.7 693.2 817.7C697.9 817.7 702.6 817.7 707.2 817.6C711.9 817.6 716.6 817.5 721.2 817.5C725.9 817.4 730.6 817.3 735.2 817.3C739.9 817.2 744.5 817.1 749.2 817.0C753.9 817.0 758.5 816.9 763.2 816.8C767.9 816.7 772.5 816.6 777.2 816.5C781.9 816.4 786.5 816.3 791.2 816.2C795.9 816.1 800.5 816.0 805.2 815.8C809.9 815.7 814.5 815.6 819.2 815.4C823.9 815.3 828.5 815.2 833.2 815.0C837.9 814.8 842.5 814.6 847.2 814.3C851.8 814.1 856.5 813.8 861.1 813.5C865.8 813.2 870.5 812.8 875.1 812.5C879.8 812.1 884.4 811.8 889.1 811.4C893.7 810.9 898.4 810.5 903.0 810.1C907.6 809.6 912.3 809.1 916.9 808.6C921.6 808.1 926.2 807.5 930.8 806.8C935.4 806.2 940.0 805.5 944.7 804.8C949.3 804.0 953.9 803.3 958.5 802.5C963.1 801.7 967.7 800.9 972.2 800.0C976.8 799.1 981.4 798.1 985.9 797.0C990.4 795.9 995.0 794.7 999.4 793.4C1003.9 792.1 1008.4 790.7 1012.8 789.3C1017.2 787.8 1021.7 786.3 1026.0 784.7C1030.4 783.1 1034.8 781.5 1039.1 779.7C1043.4 778.0 1047.7 776.1 1052.0 774.2C1056.2 772.3 1060.4 770.2 1064.6 768.2C1068.8 766.1 1072.9 764.0 1077.1 761.8C1081.2 759.6 1085.3 757.4 1089.4 755.2C1093.5 752.9 1097.5 750.6 1101.5 748.1C1105.5 745.7 1109.4 743.2 1113.3 740.6C1117.1 738.0 1120.9 735.2 1124.7 732.4C1128.4 729.6 1132.1 726.8 1135.7 723.8C1139.3 720.9 1142.9 717.9 1146.4 714.9C1149.9 711.8 1153.4 708.7 1156.8 705.4C1160.1 702.2 1163.4 698.9 1166.5 695.4C1169.6 691.9 1172.6 688.3 1175.4 684.6C1178.3 680.9 1181.0 677.1 1183.5 673.2C1186.0 669.3 1188.4 665.3 1190.6 661.2C1192.8 657.1 1194.9 652.9 1196.8 648.6C1198.7 644.4 1200.4 640.1 1201.9 635.7C1203.4 631.3 1204.7 626.8 1205.8 622.2C1206.9 617.7 1207.7 613.1 1208.5 608.5C1209.2 603.9 1209.8 599.3 1210.3 594.6C1210.8 590.0 1211.3 585.4 1211.6 580.7C1211.8 576.1 1212.0 571.4 1211.9 566.7C1211.8 562.1 1211.5 557.4 1211.0 552.8C1210.4 548.2 1209.6 543.6 1208.5 539.1C1207.3 534.6 1205.9 530.1 1204.2 525.8C1202.4 521.5 1200.3 517.4 1198.0 513.4C1195.6 509.4 1192.9 505.6 1190.0 502.0C1187.1 498.3 1183.9 494.9 1180.6 491.6C1177.3 488.3 1173.8 485.2 1170.2 482.4C1166.5 479.5 1162.7 476.9 1158.7 474.4C1154.8 471.9 1150.7 469.7 1146.5 467.5C1142.4 465.4 1138.2 463.4 1133.9 461.5C1129.7 459.6 1125.4 457.8 1121.0 456.1C1116.7 454.4 1112.3 452.9 1107.8 451.4C1103.4 449.9 1098.9 448.6 1094.5 447.3C1090.0 446.0 1085.5 444.8 1081.0 443.6C1076.4 442.5 1071.9 441.4 1067.3 440.5C1062.8 439.5 1058.2 438.6 1053.6 437.9C1049.0 437.1 1044.3 436.4 1039.7 435.9C1035.1 435.3 1030.4 434.8 1025.8 434.5C1021.1 434.1 1016.5 433.8 1011.8 433.6C1007.2 433.4 1002.5 433.2 997.8 433.2C993.2 433.1 988.5 433.2 983.8 433.3C979.2 433.4 974.5 433.6 969.9 433.8C965.2 434.1 960.5 434.4 955.9 434.8C951.3 435.3 946.6 435.8 942.0 436.5C937.4 437.2 932.8 438.1 928.3 439.0C923.7 440.0 919.2 441.2 914.7 442.3C910.1 443.5 905.6 444.7 901.1 445.9C896.6 447.2 892.1 448.5 887.7 449.9C883.3 451.3 878.9 452.9 874.5 454.6C870.2 456.2 865.9 458.1 861.7 460.1C857.4 462.0 853.3 464.1 849.2 466.3C845.0 468.5 841.0 470.9 837.0 473.3C833.1 475.8 829.2 478.4 825.4 481.1C821.6 483.8 817.9 486.6 814.3 489.6C810.7 492.5 807.2 495.6 803.8 498.8C800.4 502.0 797.1 505.3 793.9 508.7C790.8 512.2 787.7 515.7 784.8 519.3C781.8 522.9 779.0 526.6 776.3 530.4C773.5 534.2 770.9 538.0 768.3 541.9C765.8 545.8 763.3 549.8 761.0 553.8C758.6 557.8 756.3 561.9 754.1 566.0C751.9 570.1 749.8 574.3 747.8 578.5C745.8 582.7 743.9 587.0 742.0 591.3C740.2 595.6 738.4 599.9 736.8 604.2C735.1 608.6 733.5 613.0 732.0 617.4C730.4 621.8 729.0 626.2 727.6 630.7C726.2 635.1 724.9 639.6 723.8 644.1C722.6 648.6 721.6 653.2 720.7 657.8C719.8 662.3 719.0 667.0 718.3 671.6C717.6 676.2 717.0 680.8 716.5 685.4C716.0 690.1 715.7 694.7 715.6 699.4C715.4 704.0 715.3 708.7 715.3 713.4C715.4 718.0 715.6 722.7 715.9 727.4C716.2 732.0 716.7 736.7 717.3 741.3C717.9 745.9 718.6 750.5 719.5 755.1C720.4 759.7 721.4 764.2 722.6 768.7C723.7 773.2 725.1 777.7 726.5 782.2C727.9 786.6 729.3 791.1 730.8 795.5C732.3 799.9 733.8 804.3 735.6 808.6C737.3 812.9 739.1 817.2 741.2 821.4C743.3 825.6 745.5 829.7 748.0 833.6C750.5 837.5 753.2 841.3 756.1 844.9C759.1 848.5 762.3 851.9 765.6 855.1C769.0 858.3 772.6 861.4 776.2 864.2C779.9 867.1 783.7 869.8 787.7 872.3C791.6 874.8 795.6 877.2 799.7 879.3C803.8 881.5 808.1 883.5 812.3 885.4C816.6 887.3 820.9 889.0 825.3 890.7C829.6 892.4 834.0 894.0 838.4 895.5C842.8 897.0 847.3 898.4 851.7 899.7C856.2 901.0 860.7 902.1 865.3 903.3C869.8 904.5 874.3 905.7 878.8 906.9C883.3 908.1 887.8 909.3 892.4 910.4C896.9 911.5 901.4 912.5 906.0 913.4C910.6 914.3 915.2 915.1 919.8 915.8C924.4 916.5 929.0 917.1 933.7 917.7C938.3 918.3 942.9 918.7 947.6 919.2C952.2 919.7 956.9 920.1 961.5 920.6C966.2 921.0 970.8 921.4 975.5 921.7C980.1 922.1 984.8 922.4 989.4 922.7C994.1 923.0 998.7 923.3 1003.4 923.6C1008.1 923.9 1012.7 924.2 1017.4 924.4C1022.0 924.7 1026.7 924.9 1031.4 925.2C1036.0 925.4 1040.7 925.6 1045.3 925.9C1050.0 926.1 1054.7 926.3 1059.3 926.5C1064.0 926.7 1068.7 926.9 1073.3 927.1C1078.0 927.2 1082.6 927.4 1087.3 927.6C1092.0 927.8 1096.6 927.9 1101.3 928.1C1106.0 928.3 1110.6 928.4 1115.3 928.6C1120.0 928.8 1124.6 928.9 1129.3 929.1C1133.9 929.2 1138.6 929.4 1143.3 929.6C1147.9 929.7 1152.6 929.9 1157.3 930.1C1161.9 930.3 1166.6 930.5 1171.2 930.7C1175.9 930.9 1180.6 931.2 1185.2 931.4C1189.9 931.6 1194.6 931.8 1199.2 932.0C1203.9 932.2 1208.5 932.4 1213.2 932.6C1217.9 932.8 1222.5 933.0 1227.2 933.2C1231.9 933.4 1236.5 933.6 1241.2 933.9C1245.8 934.1 1250.5 934.3 1255.2 934.5C1259.8 934.7 1264.5 935.0 1269.1 935.2C1273.8 935.4 1278.5 935.6 1283.1 935.9C1287.8 936.1 1292.5 936.3 1297.1 936.5C1301.8 936.8 1306.4 937.0 1311.1 937.2C1315.8 937.4 1320.4 937.6 1325.1 937.8C1329.7 938.0 1334.4 938.2 1339.1 938.4C1343.7 938.6 1348.4 938.8 1353.1 939.0C1357.7 939.2 1362.4 939.4 1367.0 939.6C1371.7 939.7 1376.4 939.9 1381.0 940.1C1385.7 940.3 1390.4 940.4 1395.0 940.6C1399.7 940.8 1404.4 941.0 1409.0 941.1C1413.7 941.3 1418.3 941.5 1423.0 941.6C1427.7 941.8 1432.3 942.0 1437.0 942.1C1441.7 942.3 1446.3 942.5 1451.0 942.7C1455.7 942.8 1460.3 943.0 1465.0 943.2C1469.6 943.4 1474.3 943.5 1479.0 943.7C1483.6 943.9 1488.3 944.0 1493.0 944.2C1497.6 944.4 1502.3 944.5 1507.0 944.7C1511.6 944.8 1516.3 945.0 1520.9 945.1C1525.6 945.3 1530.3 945.4 1534.9 945.6C1539.6 945.7 1544.3 945.8 1548.9 945.9C1553.6 946.0 1558.3 946.1 1562.9 946.2C1567.6 946.3 1572.3 946.4 1576.9 946.5C1581.6 946.5 1586.3 946.6 1590.9 946.7C1595.6 946.8 1601.8 946.9 1604.9 946.9C1608.0 947.0 1608.8 947.0 1609.6 947.0" fill="none" stroke="#000" stroke-width="3" stroke-linecap="round" stroke-linejoin="round"/>
<circle cx="776.4" cy="262.6" r="30.4" fill="url(#gf)"/>
<path d="M750.9 244.5h0M763.7 234.5h0M779.7 231.8h0M794.9 237.8h0M804.5 251.2h0M807.2 262.6h0M802.5 278.0h0M790.7 289.4h0M775.1 293.4h0M759.4 288.5h0M748.3 276.0h0M745.6 259.3h0" fill="none" stroke="url(#gs)" stroke-width="9.400" stroke-linecap="round"/>
<circle cx="844.4" cy="262.8" r="30.4" fill="url(#gf)"/>
<path d="M818.9 244.7h0M831.6 234.7h0M847.6 232.0h0M862.9 238.0h0M872.5 251.4h0M875.1 262.8h0M870.5 278.2h0M858.6 289.6h0M843.1 293.6h0M827.4 288.7h0M816.2 276.2h0M813.6 259.5h0" fill="none" stroke="url(#gs)" stroke-width="9.400" stroke-linecap="round"/>
<circle cx="912.3" cy="263.0" r="30.4" fill="url(#gf)"/>
<path d="M886.8 244.9h0M899.6 234.9h0M915.6 232.2h0M930.8 238.2h0M940.4 251.6h0M943.1 263.0h0M938.4 278.4h0M926.6 289.8h0M911.0 293.8h0M895.3 288.9h0M884.2 276.4h0M881.5 259.7h0" fill="none" stroke="url(#gs)" stroke-width="9.400" stroke-linecap="round"/>
<circle cx="980.2" cy="263.2" r="30.4" fill="url(#gf)"/>
<path d="M954.8 245.1h0M967.5 235.1h0M983.5 232.4h0M998.8 238.4h0M1008.4 251.8h0M1011.0 263.2h0M1006.4 278.6h0M994.5 290.0h0M979.0 294.0h0M963.2 289.1h0M952.1 276.6h0M949.5 259.9h0" fill="none" stroke="url(#gs)" stroke-width="9.400" stroke-linecap="round"/>
<circle cx="1048.2" cy="263.4" r="30.4" fill="url(#gf)"/>
<path d="M1022.7 245.3h0M1035.5 235.3h0M1051.5 232.6h0M1066.7 238.6h0M1076.3 252.0h0M1079.0 263.4h0M1074.3 278.8h0M1062.5 290.2h0M1046.9 294.2h0M1031.2 289.3h0M1020.1 276.8h0M1017.4 260.1h0" fill="none" stroke="url(#gs)" stroke-width="9.400" stroke-linecap="round"/>
<circle cx="1116.2" cy="263.6" r="30.4" fill="url(#gf)"/>
<path d="M1090.7 245.5h0M1103.5 235.5h0M1119.5 232.8h0M1134.7 238.8h0M1144.2 252.2h0M1147.0 263.6h0M1142.2 279.0h0M1130.5 290.4h0M1114.9 294.4h0M1099.2 289.5h0M1088.1 277.0h0M1085.4 260.3h0" fill="none" stroke="url(#gs)" stroke-width="9.400" stroke-linecap="round"/>
<circle cx="1184.1" cy="263.8" r="30.4" fill="url(#gf)"/>
<path d="M1158.6 245.7h0M1171.4 235.7h0M1187.4 233.0h0M1202.6 239.0h0M1212.2 252.4h0M1214.9 263.8h0M1210.2 279.2h0M1198.4 290.6h0M1182.8 294.6h0M1167.1 289.7h0M1156.0 277.2h0M1153.3 260.5h0" fill="none" stroke="url(#gs)" stroke-width="9.400" stroke-linecap="round"/>
<circle cx="1252.0" cy="264.0" r="30.4" fill="url(#gf)"/>
<path d="M1226.5 245.9h0M1239.3 235.9h0M1255.3 233.2h0M1270.5 239.2h0M1280.1 252.6h0M1282.8 264.0h0M1278.1 279.4h0M1266.3 290.8h0M1250.8 294.8h0M1235.0 289.9h0M1224.0 277.4h0M1221.2 260.7h0" fill="none" stroke="url(#gs)" stroke-width="9.400" stroke-linecap="round"/>
<circle cx="1320.0" cy="264.2" r="30.4" fill="url(#gf)"/>
<path d="M1294.5 246.1h0M1307.3 236.1h0M1323.3 233.4h0M1338.5 239.4h0M1348.1 252.8h0M1350.8 264.2h0M1346.1 279.6h0M1334.3 291.0h0M1318.7 295.0h0M1303.0 290.1h0M1291.9 277.6h0M1289.2 260.9h0" fill="none" stroke="url(#gs)" stroke-width="9.400" stroke-linecap="round"/>
<g fill="none" stroke="#4c82ff" stroke-width="1.300"><circle cx="776.4" cy="262.6" r="30.4"/><circle cx="1320.0" cy="264.2" r="30.8"/><path d="M776.4 262.6L1320.0 264.2"/></g>
<g fill="#4c82ff"><rect x="774.1" y="229.9" width="4.600" height="4.600"/><rect x="774.1" y="290.7" width="4.600" height="4.600"/><rect x="743.7" y="260.3" width="4.600" height="4.600"/><rect x="804.5" y="260.3" width="4.600" height="4.600"/><rect x="1317.7" y="231.1" width="4.600" height="4.600"/><rect x="1317.7" y="292.7" width="4.600" height="4.600"/><rect x="1286.9" y="261.9" width="4.600" height="4.600"/><rect x="1348.5" y="261.9" width="4.600" height="4.600"/><rect x="774.1" y="260.3" width="4.600" height="4.600"/><circle cx="1320.0" cy="264.2" r="2.800"/></g>
<g fill="#000"><path d="M184.600 945.500h12.800v3h-12.800zM202 948l14-3.200l5 .4v2.800zM228.500 946.500h45.500v2h-45.500zM297 945.500h13.700v3h-13.700zM333.500 945.500h13.500v3h-13.500zM376.500 946l15.500-1.500v4h-15.500zM425 945.500h13.600v3h-13.600z"/></g>
</svg>

<div class="abs" style="left:1610px;top:94px;width:17px;height:854px;background:#4b4b4b;border-left:1px solid #505050"></div>
<div class="abs" style="left:1611px;top:544px;width:15px;height:25px;background:#5f5f5f;border-radius:7.500px"></div>
<svg style="left:1614px;top:100px" width="10" height="6" viewBox="0 0 10 6"><path d="M1 5l4-3.800l4 3.800" fill="none" stroke="#bdbdbd" stroke-width="1.500"/></svg>
<div class="abs" style="left:1626px;top:64px;width:3px;height:884px;background:linear-gradient(90deg,#3c3c3c 0 1px,#444 1px 2px,#3a3a3a 2px 3px)"></div>
<div class="abs" style="left:1629px;top:64px;width:13px;height:884px;background:#535353"></div>
<div class="abs" style="left:1629px;top:64px;width:13px;height:13px;background:#454545"></div>
<svg style="left:1629px;top:64px" width="13" height="884" viewBox="1629 64 13 884">
<g stroke="#3a3a3a" stroke-width="1"><path d="M1629 145.500h13M1629 242.500h13M1629 339.500h13M1629 407.500h13M1629 494.500h13"/></g>
<g stroke="#414141" stroke-width="1"><path d="M1634.500 81v6M1636.500 81v6M1638.500 81v6M1640.500 81v6M1634.500 149v4M1636.500 149v4M1638.500 149v4M1640.500 149v4M1634.500 246v4M1636.500 246v4M1638.500 246v4M1640.500 246v4M1634.500 343v4M1636.500 343v4M1638.500 343v4M1640.500 343v4M1634.500 411v4M1636.500 411v4M1638.500 411v4M1640.500 411v4"/></g>
<circle cx="1644.500" cy="101" r="5.500" fill="#d0d0d0"/>
<rect x="1640.500" y="121.500" width="6" height="15" fill="#d0d0d0"/>
<rect x="1640" y="164" width="8" height="10.500" fill="#6a6a6a" stroke="#d0d0d0" stroke-width="1.200"/>
<circle cx="1646" cy="194" r="5.500" fill="#bdbdbd"/>
<circle cx="1646.500" cy="225" r="5" fill="#d0d0d0"/>
<path d="M1639.500 262h4M1639.500 265.500h4M1639.500 269h4" stroke="#e0e0e0" stroke-width="1.600"/>
<rect x="1640" y="288" width="8" height="10" fill="#2e2e2e" stroke="#d0d0d0" stroke-width="1.200"/>
<circle cx="1646" cy="320.500" r="6.500" fill="#d6d6d6"/>
<circle cx="1647" cy="363" r="6" fill="none" stroke="#8a8a8a" stroke-width="1.600"/>
<rect x="1640" y="391.500" width="5" height="5" fill="none" stroke="#bdbdbd" stroke-width="1.200"/>
<path d="M1640 431l2 2.500l-2 2.500" stroke="#bdbdbd" fill="none" stroke-width="1.200"/>
<rect x="1639.500" y="443" width="6" height="15" fill="#cfcfcf"/>
<rect x="1640" y="469" width="6" height="12" fill="#3a3a3a" stroke="#d0d0d0" stroke-width="1.200"/>
</svg>
<div class="abs" style="left:0;top:64px;width:1642px;height:1px;background:#3a3a3a"></div>

</body></html>
